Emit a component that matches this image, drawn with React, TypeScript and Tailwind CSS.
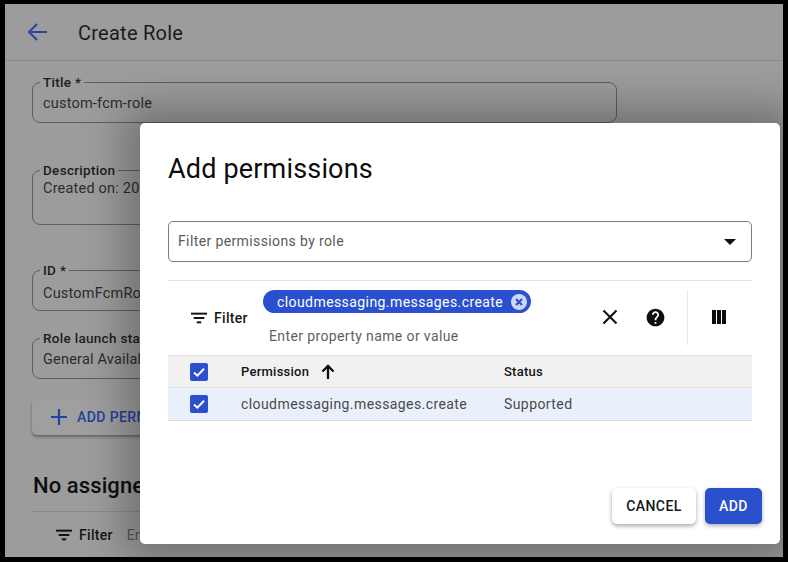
import React from "react";

const font = { fontFamily: "Roboto, 'Liberation Sans', sans-serif" };

function Field({ label, value, h, mt, vt }: { label: string; value: string; h: string; mt: string; vt: string }) {
  return (
    <fieldset className={`${h} ${mt} w-[585px] rounded-[8px] border border-[#5f5f5f] pl-[7px]`}>
      <legend className="px-[3px] text-[13.5px] font-medium leading-[11px] tracking-[0.3px] text-[#1c1c1c]">{label}</legend>
      <div className={`${vt} pl-[3px] text-[14.5px] leading-[20px] tracking-[0.2px] text-[#2c2c2c]`}>{value}</div>
    </fieldset>
  );
}

function FilterIcon({ className }: { className: string }) {
  return (
    <svg viewBox="0 0 18 12" className={className} fill="currentColor">
      <rect x="0" y="0" width="18" height="2.2" />
      <rect x="3" y="4.9" width="12" height="2.2" />
      <rect x="6.5" y="9.8" width="5" height="2.2" />
    </svg>
  );
}

function Check() {
  return (
    <span className="flex h-[18px] w-[18px] items-center justify-center rounded-[2px] bg-[#2a50cf]">
      <svg viewBox="0 0 18 18" className="h-[18px] w-[18px]" fill="none" stroke="#fff" strokeWidth="2">
        <path d="M4 9.5l3.4 3.2L14 5.8" />
      </svg>
    </span>
  );
}

export default function App() {
  return (
    <div className="h-[562px] w-[788px] overflow-hidden bg-black pb-[5px] pl-[5px] pr-[5px] pt-[4px]" style={font}>
      <div className="relative h-[553px] w-[778px] overflow-hidden bg-[#9c9c9c]">
        <header className="flex h-[57px] items-center border-b border-[#8a8a8a] pl-[20px]">
          <svg viewBox="0 0 24 24" className="h-[24px] w-[24px] text-[#2a469f]" fill="none" stroke="currentColor" strokeWidth="2">
            <path d="M22 13H4M12 5l-8 8 8 8" transform="translate(0 -1)" />
          </svg>
          <h1 className="ml-[29px] pt-[2px] text-[20px] font-normal tracking-[0.25px] text-[#1b1b1b]">Create Role</h1>
        </header>

        <main className="pl-[27px]">
          <Field label="Title *" value="custom-fcm-role" h="h-[46px]" mt="mt-[16px]" vt="pt-[6px]" />
          <Field label="Description" value="Created on: 2024" h="h-[60px]" mt="mt-[42px]" vt="pt-[3px]" />
          <Field label="ID *" value="CustomFcmRole" h="h-[46px]" mt="mt-[40px]" vt="pt-[8px]" />
          <Field label="Role launch stage" value="General Availability" h="h-[46px]" mt="mt-[22px]" vt="pt-[6px]" />

          <button className="mt-[20px] flex h-[36px] w-[200px] items-center rounded-[5px] bg-[#9f9f9f] pl-[18px] text-[14px] font-medium tracking-[0.4px] text-[#25429c] shadow-[0_2px_3px_rgba(0,0,0,0.35)]">
            <svg viewBox="0 0 18 18" className="mr-[9px] h-[18px] w-[18px]" fill="none" stroke="currentColor" strokeWidth="2.2">
              <path d="M9 1v16M1 9h16" />
            </svg>
            ADD PERMISSIONS
          </button>

          <h2 className="ml-[1px] mt-[36px] text-[22px] font-medium leading-[30px] tracking-[0.1px] text-[#0f0f0f]">No assigned permissions</h2>
          <div className="mt-[10px] w-[585px] border-t border-[#8a8a8a]" />
          <div className="mt-[13px] flex items-center pl-[24px] text-[14px] leading-[20px]">
            <FilterIcon className="h-[12px] w-[16px] text-[#111]" />
            <span className="ml-[7px] font-medium tracking-[0.3px] text-[#161616]">Filter</span>
            <span className="ml-[14px] text-[#555]">Enter property name or value</span>
          </div>
        </main>

        <section className="absolute left-[135px] top-[119px] flex h-[421px] w-[640px] flex-col rounded-[5px] bg-white px-[28px] pt-[28px] shadow-[0_0_40px_16px_rgba(0,0,0,0.28)]">
          <h2 className="text-[27px] font-normal leading-[36px] tracking-[0.17px] text-[#0c0c0c]">Add permissions</h2>

          <div className="mt-[34px] flex h-[41px] items-center justify-between rounded-[5px] border border-[#7c7c7c] pl-[9px] pr-[15px] text-[14px] tracking-[0.38px] text-[#5a5a5a]">
            Filter permissions by role
            <span className="h-0 w-0 border-x-[6px] border-t-[6px] border-x-transparent border-t-[#111]" />
          </div>

          <div className="mt-[18px] flex h-[75px] border-t border-[#e2e2e2]">
            <div className="flex w-[95px] items-center pl-[23px]">
              <FilterIcon className="h-[12px] w-[16px] text-[#111]" />
              <span className="ml-[7px] text-[14px] font-medium tracking-[0.3px] text-[#161616]">Filter</span>
            </div>
            <div className="pt-[9px]">
              <div className="flex h-[23px] w-[268px] items-center justify-between rounded-full bg-[#2a50cf] pl-[14px] pr-[4px] pt-[1px] text-[14px] tracking-[0.42px] text-white">
                cloudmessaging.messages.create
                <span className="-mt-[1px] flex h-[16px] w-[16px] items-center justify-center rounded-full bg-[#cfd8f5]">
                  <svg viewBox="0 0 10 10" className="h-[10px] w-[10px]" fill="none" stroke="#2a50cf" strokeWidth="2.2">
                    <path d="M2 2l6 6M8 2l-6 6" />
                  </svg>
                </span>
              </div>
              <div className="ml-[6px] mt-[13px] text-[14px] leading-[20px] tracking-[0.38px] text-[#5f5f5f]">Enter property name or value</div>
            </div>
            <div className="ml-[71px] mt-[28px] h-[24px]">
              <svg viewBox="0 0 16 16" className="h-[16px] w-[16px]" fill="none" stroke="#0d0d0d" strokeWidth="2.1">
                <path d="M1.5 1.5l13 13M14.5 1.5l-13 13" />
              </svg>
            </div>
            <div className="ml-[28px] mt-[27px]">
              <svg viewBox="0 0 24 24" className="h-[19px] w-[19px]" fill="#0d0d0d" style={{ transform: "scale(1.12)" }}>
                <path d="M12 2C6.48 2 2 6.48 2 12s4.48 10 10 10 10-4.48 10-10S17.52 2 12 2zm1 17h-2v-2h2v2zm2.07-7.75l-.9.92C13.45 12.9 13 13.5 13 15h-2v-.5c0-1.1.45-2.1 1.17-2.83l1.24-1.26c.37-.36.59-.86.59-1.41 0-1.1-.9-2-2-2s-2 .9-2 2H8c0-2.21 1.79-4 4-4s4 1.79 4 4c0 .88-.36 1.68-.93 2.25z" />
              </svg>
            </div>
            <div className="ml-[22px] mt-[9px] h-[55px] border-l border-[#e6e6e6]" />
            <div className="ml-[24px] mt-[29px] flex h-[14px] w-[14px] gap-[1px]">
              <span className="w-[4px] bg-[#0d0d0d]" />
              <span className="w-[4px] bg-[#0d0d0d]" />
              <span className="w-[4px] bg-[#0d0d0d]" />
            </div>
          </div>

          <div className="flex h-[33px] items-center border-y border-[#e0e0e0] bg-[#f1f1f1] text-[13px] font-medium tracking-[0.25px] text-[#141414]">
            <div className="w-[73px] pl-[22px]"><Check /></div>
            <div className="flex w-[263px] items-center">
              Permission
              <svg viewBox="0 0 16 16" className="ml-[11px] h-[16px] w-[16px]" fill="none" stroke="#0d0d0d" strokeWidth="2.3">
                <path d="M8 15V2M2.5 7.5L8 2l5.5 5.5" />
              </svg>
            </div>
            <div>Status</div>
          </div>
          <div className="flex h-[33px] items-center border-b border-[#dcdcdc] bg-[#e9f0fc] text-[14px] tracking-[0.42px] text-[#4a4a4a]">
            <div className="w-[73px] pl-[22px]"><Check /></div>
            <div className="w-[263px]">cloudmessaging.messages.create</div>
            <div>Supported</div>
          </div>

          <div className="-mr-[10px] mt-[67px] flex justify-end gap-[9px]">
            <button className="h-[36px] w-[84px] rounded-[5px] bg-white text-[14px] font-medium tracking-[0.4px] text-[#161616] shadow-[0_2px_4px_rgba(0,0,0,0.35)]">CANCEL</button>
            <button className="h-[36px] w-[57px] rounded-[5px] bg-[#2a50cf] text-[14px] font-medium tracking-[0.4px] text-white shadow-[0_2px_4px_rgba(0,0,0,0.3)]">ADD</button>
          </div>
        </section>
      </div>
    </div>
  );
}
